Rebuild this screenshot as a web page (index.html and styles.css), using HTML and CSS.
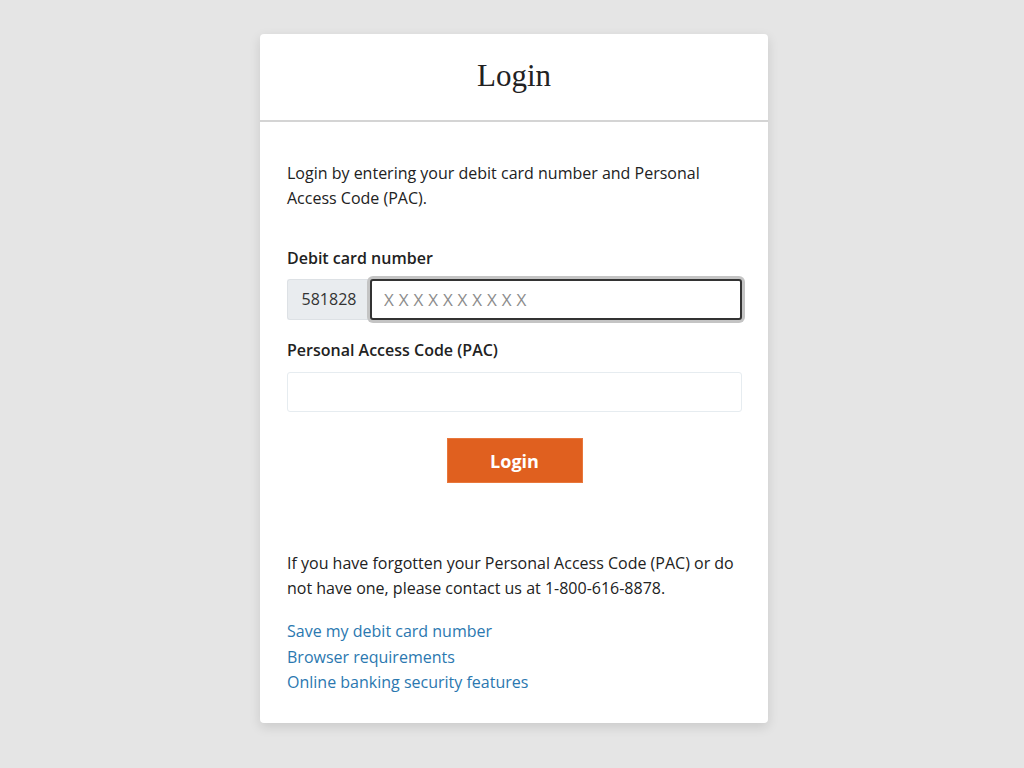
FILE: index.html
```html
<!DOCTYPE html>
<html lang="en">
<head>
<meta charset="utf-8">
<title>Login</title>
<link rel="stylesheet" href="styles.css">
</head>
<body>
<main class="page">
  <section class="card">
    <header class="card-header">
      <h1 class="title">Login</h1>
    </header>
    <div class="card-body">
      <p class="intro">Login by entering your debit card number and Personal Access Code (PAC).</p>
      <form class="form">
        <label class="label" for="card">Debit card number</label>
        <div class="input-group">
          <span class="prefix">581828</span>
          <input id="card" class="input input-focus" type="text" placeholder="XXXXXXXXXX">
        </div>
        <label class="label label-pac" for="pac">Personal Access Code (PAC)</label>
        <input id="pac" class="input input-plain" type="password">
        <div class="actions">
          <button type="button" class="btn">Login</button>
        </div>
      </form>
      <p class="help">If you have forgotten your Personal Access Code (PAC) or do not have one, please contact us at 1-800-616-8878.</p>
      <ul class="links">
        <li><a href="#">Save my debit card number</a></li>
        <li><a href="#">Browser requirements</a></li>
        <li><a href="#">Online banking security features</a></li>
      </ul>
    </div>
  </section>
</main>
</body>
</html>
```

FILE: styles.css
```css
* { box-sizing: border-box; }
html, body {
  margin: 0;
  padding: 0;
  background: #e5e5e5;
  font-family: "Open Sans", "Noto Sans", sans-serif;
  color: #222;
}
.page {
  display: flex;
  justify-content: center;
  padding-top: 34px;
  padding-left: 4px;
  min-height: 768px;
}
.card {
  width: 508px;
  height: 689px;
  background: #fff;
  border-radius: 4px;
  box-shadow: 0 4px 12px rgba(0,0,0,0.12);
  display: flex;
  flex-direction: column;
}
.card-header {
  height: 88px;
  border-bottom: 2px solid #d4d4d4;
  display: flex;
  align-items: center;
  justify-content: center;
}
.title {
  margin: 0;
  font-family: "Liberation Serif", "DejaVu Serif", serif;
  font-weight: normal;
  font-size: 31px;
  color: #222;
  padding-bottom: 2px;
}
.card-body {
  padding: 39px 26px 0 27px;
  font-size: 16px;
  line-height: 25px;
}
.intro {
  margin: 0 0 35px 0;
}
.form {
  display: flex;
  flex-direction: column;
}
.label {
  font-weight: 600;
  font-size: 16px;
  line-height: 25px;
  margin-bottom: 8px;
}
.label-pac {
  margin-top: 18px;
  margin-bottom: 9px;
}
.input-group {
  display: flex;
  height: 41px;
}
.prefix {
  width: 83px;
  background: #e9ecef;
  border: 1px solid #dde1e5;
  border-right: none;
  border-radius: 3px 0 0 3px;
  display: flex;
  align-items: center;
  justify-content: center;
  color: #333;
  font-size: 16px;
}
.input {
  font-family: inherit;
  font-size: 17px;
  outline: none;
}
.input-focus {
  flex: 1;
  border: 2px solid #333;
  border-radius: 3px;
  box-shadow: 0 0 0 3px #c4c4c4;
  padding: 0 12px;
  letter-spacing: 4.9px;
  color: #333;
}
.input-focus::placeholder {
  color: #8c8c8c;
}
.input-plain {
  height: 40px;
  border: 1px solid #e6ecf0;
  border-radius: 3px;
  padding: 0 12px;
}
.actions {
  display: flex;
  justify-content: center;
  margin-top: 26px;
}
.btn {
  width: 136px;
  height: 45px;
  background: #e0601f;
  border: 1px solid #e8773b;
  color: #fff;
  font-family: inherit;
  font-weight: 700;
  font-size: 18px;
  cursor: pointer;
}
.help {
  margin: 68px 0 0 0;
}
.links {
  list-style: none;
  margin: 18px 0 0 0;
  padding: 0;
  line-height: 25.5px;
}
.links a {
  color: #2b78b0;
  text-decoration: none;
}
```
